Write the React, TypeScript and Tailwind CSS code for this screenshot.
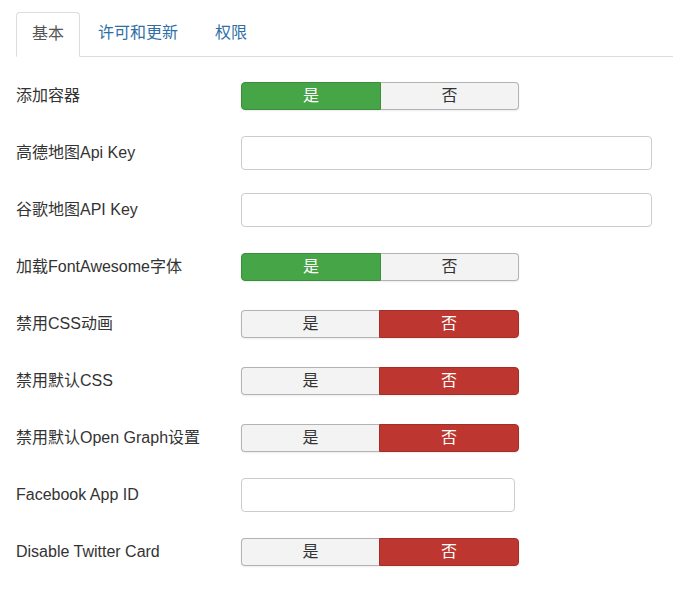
import React from 'react'

type Row =
  | { label: string; kind: 'toggle'; value: 'yes' | 'no' }
  | { label: string; kind: 'input'; width: string }

const rows: Row[] = [
  { label: '添加容器', kind: 'toggle', value: 'yes' },
  { label: '高德地图Api Key', kind: 'input', width: 'w-[411px]' },
  { label: '谷歌地图API Key', kind: 'input', width: 'w-[411px]' },
  { label: '加载FontAwesome字体', kind: 'toggle', value: 'yes' },
  { label: '禁用CSS动画', kind: 'toggle', value: 'no' },
  { label: '禁用默认CSS', kind: 'toggle', value: 'no' },
  { label: '禁用默认Open Graph设置', kind: 'toggle', value: 'no' },
  { label: 'Facebook App ID', kind: 'input', width: 'w-[274px]' },
  { label: 'Disable Twitter Card', kind: 'toggle', value: 'no' },
]

function Toggle({ value }: { value: 'yes' | 'no' }) {
  const yes = value === 'yes'
  return (
    <div className="flex h-7 w-[278px] shadow-[0_1px_2px_rgba(0,0,0,0.08)] rounded">
      <div
        className={
          yes
            ? 'flex w-[140px] items-center justify-center rounded-l border border-[#3b8c3b] bg-[#46a546] text-white'
            : 'flex w-[138px] items-center justify-center rounded-l border border-r-0 border-[#b3b3b3] bg-[#f3f3f3] text-[#333]'
        }
      >
        是
      </div>
      <div
        className={
          yes
            ? 'flex flex-1 items-center justify-center rounded-r border border-l-0 border-[#b3b3b3] bg-[#f3f3f3] text-[#333]'
            : 'flex flex-1 items-center justify-center rounded-r border border-[#a52d27] bg-[#bd362f] text-white'
        }
      >
        否
      </div>
    </div>
  )
}

export default function App() {
  return (
    <div className="bg-white pl-4 pt-3 text-[16px] text-[#333] [font-family:'Liberation_Sans','Noto_Sans_CJK_SC',sans-serif]">
      <ul className="flex border-b border-[#ddd]">
        <li className="-mb-px rounded-t border border-[#ddd] border-b-white bg-white px-[15px] pb-[12px] pt-[11px] leading-5 text-[#555]">
          基本
        </li>
        <li className="ml-0.5 px-4 pb-[12px] pt-[11px] leading-5 text-[#2f6fa7]">许可和更新</li>
        <li className="ml-[5px] px-4 pb-[12px] pt-[11px] leading-5 text-[#2f6fa7]">权限</li>
      </ul>
      <div className="mt-[10px]">
        {rows.map((row) => (
          <div key={row.label} className="flex h-[57px] items-center">
            <label className="w-[225px] shrink-0">{row.label}</label>
            {row.kind === 'toggle' ? (
              <Toggle value={row.value} />
            ) : (
              <input
                type="text"
                className={`h-[34px] ${row.width} rounded border border-[#ccc] bg-white px-2 outline-none`}
              />
            )}
          </div>
        ))}
      </div>
    </div>
  )
}
